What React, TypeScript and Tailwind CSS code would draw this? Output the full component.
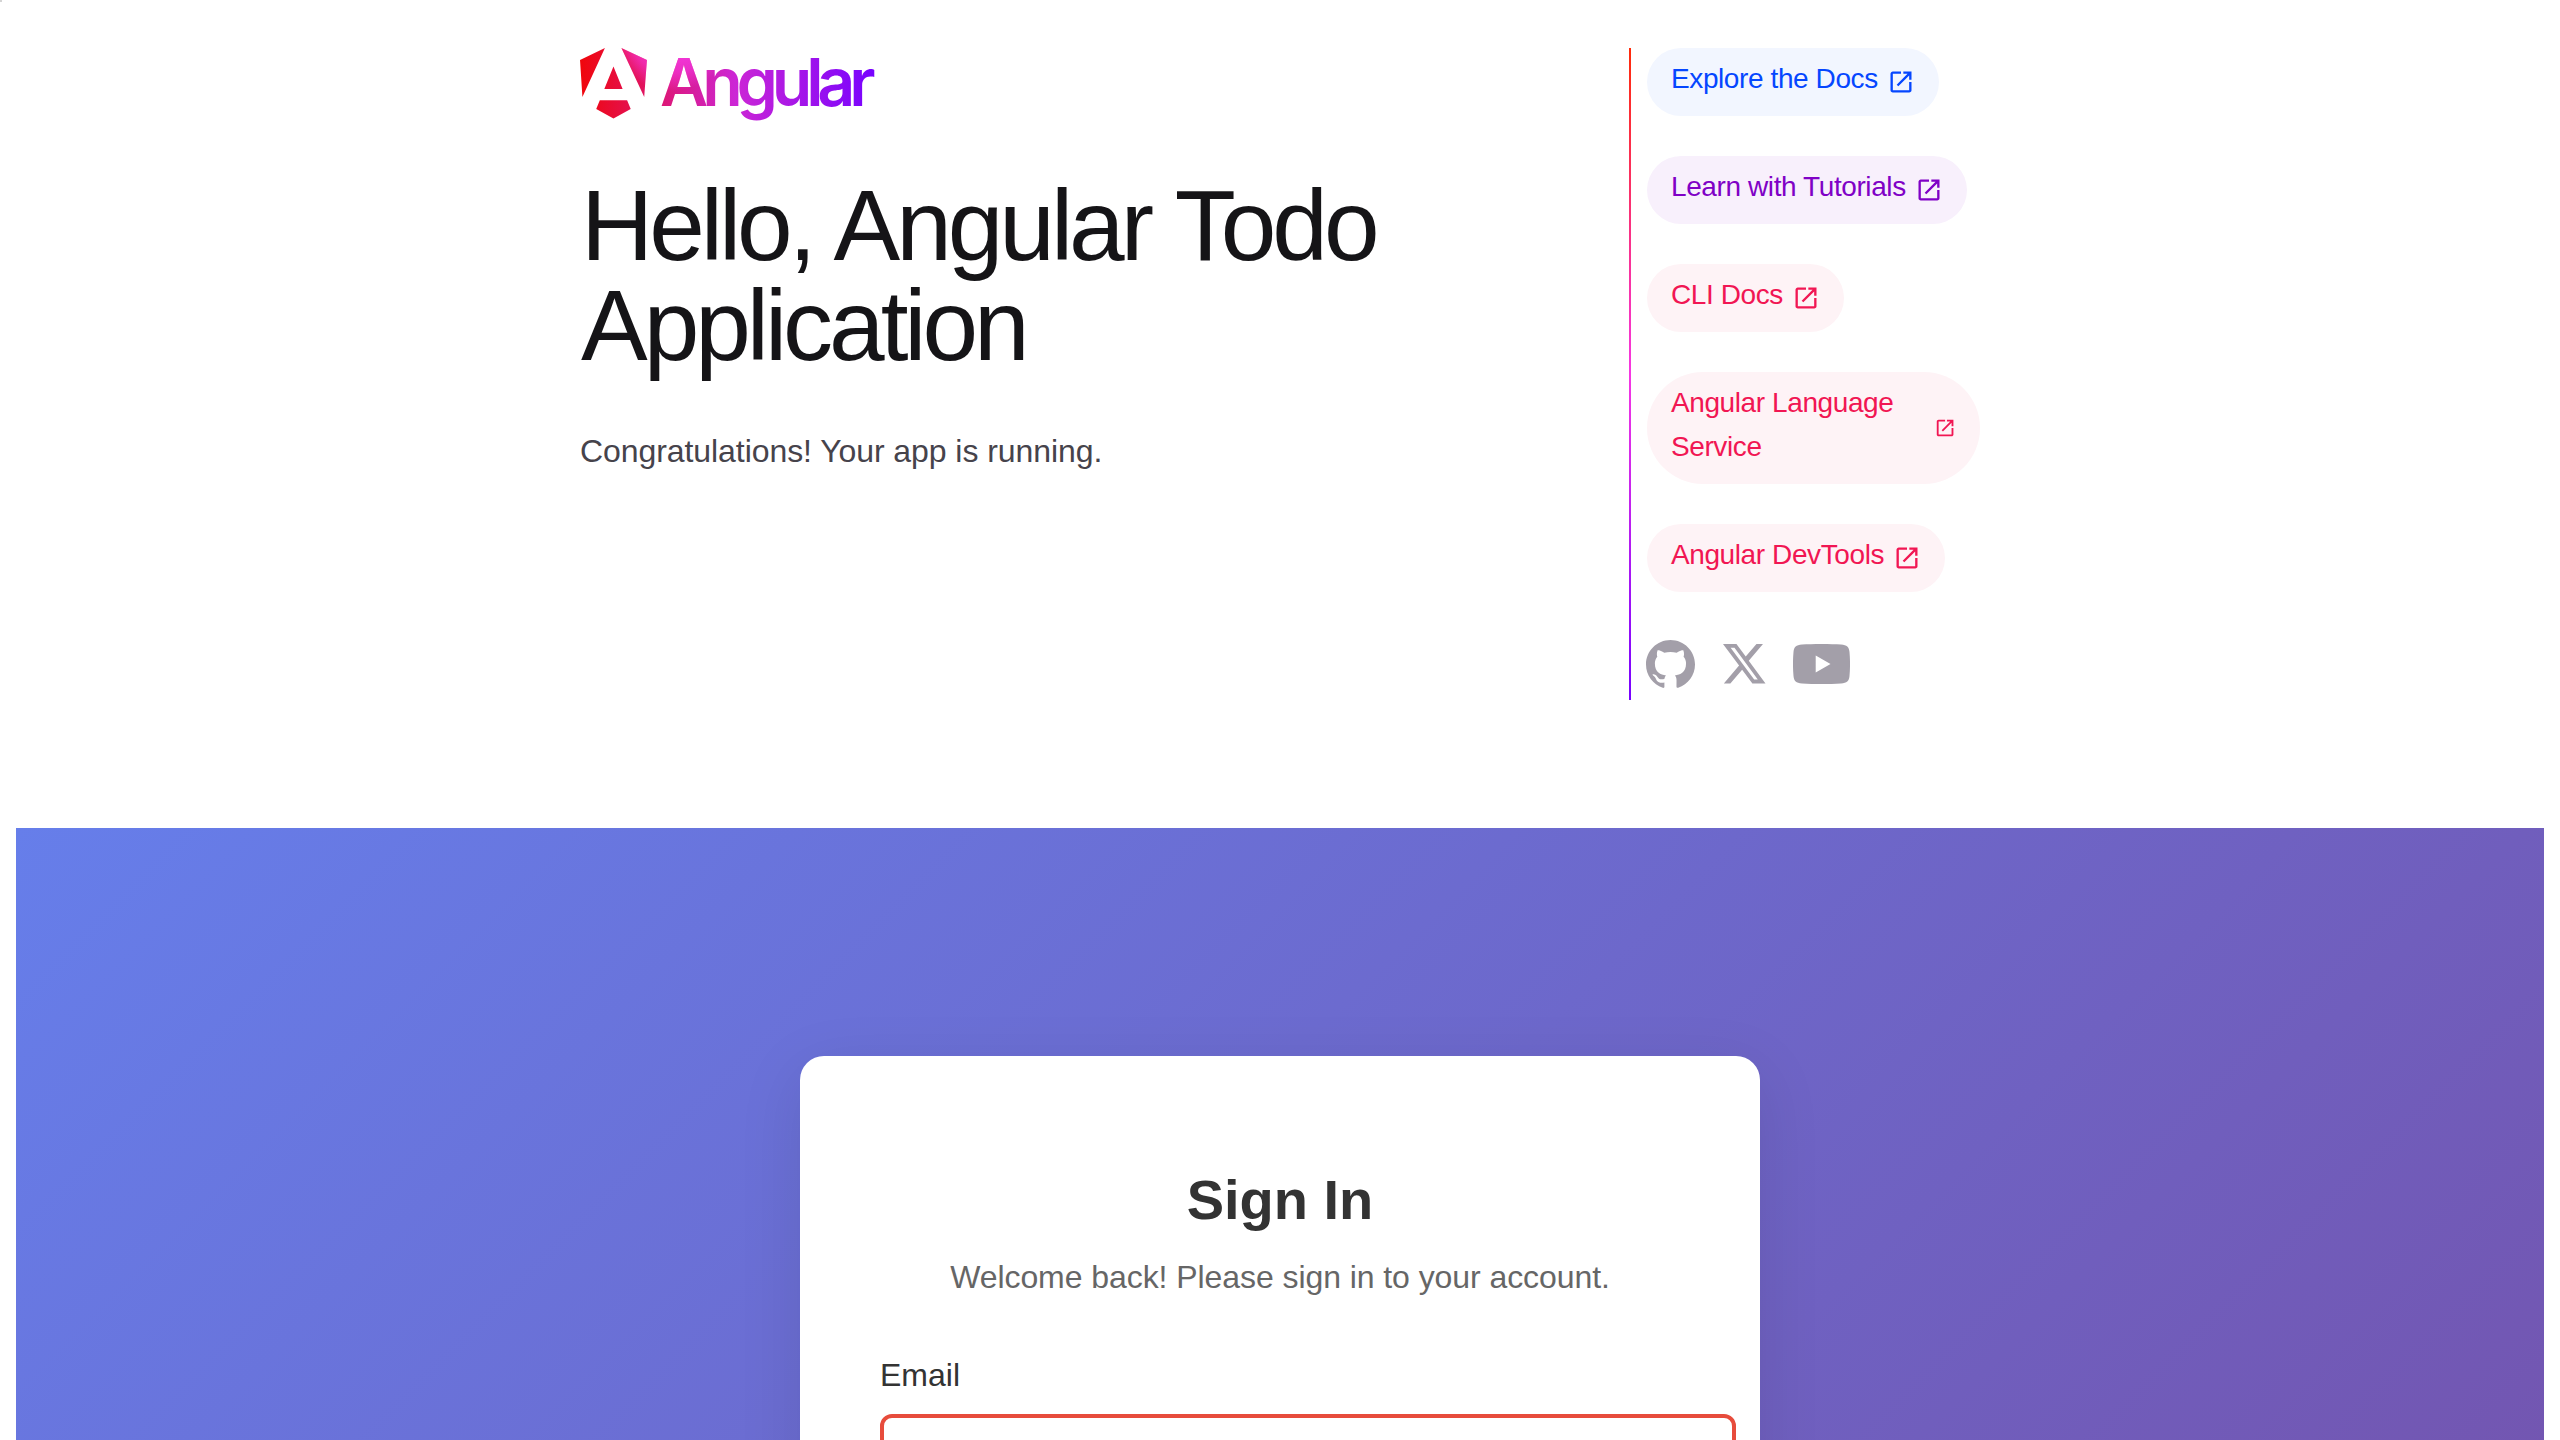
const links = [
  { label: "Explore the Docs", tone: "text-[#0546ff] bg-[#f2f6ff]" },
  { label: "Learn with Tutorials", tone: "text-[#8001c6] bg-[#f8f0fc]" },
  { label: "CLI Docs", tone: "text-[#f11653] bg-[#fef3f6]" },
  { label: "Angular Language Service", tone: "text-[#f11653] bg-[#fef3f6]" },
  { label: "Angular DevTools", tone: "text-[#f11653] bg-[#fef3f6]" },
];

function OpenIcon() {
  return (
    <svg viewBox="0 -960 960 960" className="ml-[9px] h-[28px] w-[28px] min-w-0 shrink" fill="currentColor">
      <path d="M200-120q-33 0-56.500-23.500T120-200v-560q0-33 23.500-56.500T200-840h280v80H200v560h560v-280h80v280q0 33-23.500 56.500T760-120H200Zm188-212-56-56 372-372H560v-80h280v280h-80v-144L388-332Z" />
    </svg>
  );
}

function AngularLogo() {
  return (
    <svg viewBox="0 0 982 239" className="h-[71.7px] w-[294.6px] overflow-visible" aria-label="Angular">
      <defs>
        <linearGradient id="base" gradientUnits="userSpaceOnUse" x1="0" x2="982" y1="192" y2="192">
          <stop stopColor="#F0060B" />
          <stop offset=".526" stopColor="#CC26D5" />
          <stop offset="1" stopColor="#7702FF" />
        </linearGradient>
        <radialGradient id="glow" gradientUnits="userSpaceOnUse" cx="305.500" cy="-61.500" r="205.800">
          <stop stopColor="#FF41F8" />
          <stop offset=".707" stopColor="#FF41F8" stopOpacity=".5" />
          <stop offset="1" stopColor="#FF41F8" stopOpacity="0" />
        </radialGradient>
      </defs>
      {["url(#base)", "url(#glow)"].map((fill) => (
        <g key={fill} fill={fill}>
          <path d="M0 40 83 0 8 163ZM138 0 223 40 214 163ZM111.500 62 142 137H81ZM66 174H157L169 203 111.500 235 54 203Z" />
          <text x="267" y="192" fontFamily="Inter, sans-serif" fontWeight="600" fontSize="221" textLength="718" lengthAdjust="spacing">
            Angular
          </text>
        </g>
      ))}
    </svg>
  );
}

export default function App() {
  return (
    <div className="h-[1440px] w-full overflow-hidden bg-white font-['Liberation_Sans',Arial,sans-serif] text-[32px]">
      <div className="absolute top-0 left-0 h-[2px] w-[2px] bg-[#d4d4d4]" />
      <main className="mx-auto flex h-[828px] w-[1400px] items-start pt-[48px]">
        <div className="w-[1049px]">
          <AngularLogo />
          <h1 className="mt-[55px] ml-px w-[900px] text-[100px] leading-[100px] tracking-[-4.05px] text-[#151417] [word-spacing:3px]">
            Hello, Angular Todo Application
          </h1>
          <p className="mt-[52px] leading-[48px] tracking-[-0.07px] text-[#46434b]">Congratulations! Your app is running.</p>
        </div>
        <div className="mr-[16px] h-[652px] w-[2px] shrink-0 bg-[linear-gradient(to_bottom,#ff2b0a_0%,#f637e3_50%,#7702ff_100%)]" />
        <div className="flex w-[333px] flex-col items-start gap-[40px]">
          {links.map((l) => (
            <a key={l.label} className={"flex items-center rounded-[56px] px-[24px] py-[12px] text-[28px] leading-[44px] tracking-[-0.4px] " + l.tone}>
              <span className="-mt-[3px] mb-[3px]">{l.label}</span>
              <OpenIcon />
            </a>
          ))}
          <div className="-ml-px flex items-center gap-[28px] pt-[8px] text-[#a39fa9]">
            <svg viewBox="0 0 24.610 24" className="h-[48px] w-[49px]" fill="currentColor">
              <path d="M12.3047 0C5.50634 0 0 5.50942 0 12.3047C0 17.7423 3.52529 22.3535 8.41332 23.9787C9.02856 24.0946 9.25414 23.7142 9.25414 23.3871C9.25414 23.0949 9.24389 22.3207 9.23876 21.2953C5.81601 22.0377 5.09414 19.6444 5.09414 19.6444C4.53427 18.2243 3.72524 17.8449 3.72524 17.8449C2.61064 17.082 3.81137 17.0973 3.81137 17.0973C5.04697 17.1835 5.69604 18.3647 5.69604 18.3647C6.79321 20.2463 8.57636 19.7029 9.27978 19.3881C9.39052 18.5924 9.70736 18.0499 10.0591 17.7423C7.32641 17.4347 4.45429 16.3765 4.45429 11.6618C4.45429 10.3185 4.9311 9.22133 5.72065 8.36C5.58222 8.04931 5.16694 6.79833 5.82831 5.10337C5.82831 5.10337 6.85883 4.77319 9.2121 6.36459C10.1965 6.09082 11.2424 5.95546 12.2883 5.94931C13.3342 5.95546 14.3801 6.09082 15.3644 6.36459C17.7023 4.77319 18.7328 5.10337 18.7328 5.10337C19.3942 6.79833 18.9789 8.04931 18.8559 8.36C19.6403 9.22133 20.1171 10.3185 20.1171 11.6618C20.1171 16.3888 17.2409 17.4296 14.5031 17.7321C14.9338 18.1012 15.3337 18.8559 15.3337 20.0084C15.3337 21.6552 15.3183 22.978 15.3183 23.3779C15.3183 23.7009 15.5336 24.0854 16.1642 23.9623C21.0871 22.3484 24.6094 17.7341 24.6094 12.3047C24.6094 5.50942 19.0999 0 12.3047 0Z" />
            </svg>
            <svg viewBox="1.254 2.250 21.573 19.500" preserveAspectRatio="none" className="h-[39.500px] w-[42.500px]" fill="currentColor">
              <path d="M18.244 2.250h3.308l-7.227 8.260 8.502 11.240H16.170l-5.214-6.817L4.990 21.750H1.680l7.730-8.835L1.254 2.250H8.080l4.713 6.231zm-1.161 17.520h1.833L7.084 4.126H5.117z" />
            </svg>
            <svg viewBox="0 0 57 40" className="-ml-px h-[40px] w-[57px]" fill="currentColor">
              <path fillRule="evenodd" d="M28.500 0C36 0 43 .200 48 .500C54 .900 56 3 56.500 8C57.200 16 57.200 24 56.500 32C56 37 54 39 48 39.400C36 40.200 21 40.200 9 39.400C3 39 1 37 .500 32C-.200 24-.200 16 .500 8C1 3 3 .900 9 .500C14 .200 21 0 28.500 0ZM22.700 11.500V28.500L37.500 20Z" />
            </svg>
          </div>
        </div>
      </main>
      <section className="mx-[16px] h-[1480px] bg-[linear-gradient(135deg,#667eea_0%,#764ba2_100%)] pt-[228px]">
        <div className="mx-auto h-[984px] w-[960px] rounded-[24px] bg-white px-[80px] pt-[106px] text-center shadow-[0_16px_64px_rgba(0,0,0,0.1)]">
          <h2 className="text-[56px] leading-[76px] font-bold text-[#333]">Sign In</h2>
          <p className="mt-[15px] leading-[48px] tracking-[-0.07px] text-[#666]">Welcome back! Please sign in to your account.</p>
          <div className="mt-[50px] flex flex-col items-start">
            <label className="leading-[48px] text-[#333]">Email</label>
            <input className="mt-[15px] h-[90px] w-[856px] shrink-0 rounded-[12px] border-4 border-[#e74c3c] bg-white" />
          </div>
        </div>
      </section>
    </div>
  );
}
